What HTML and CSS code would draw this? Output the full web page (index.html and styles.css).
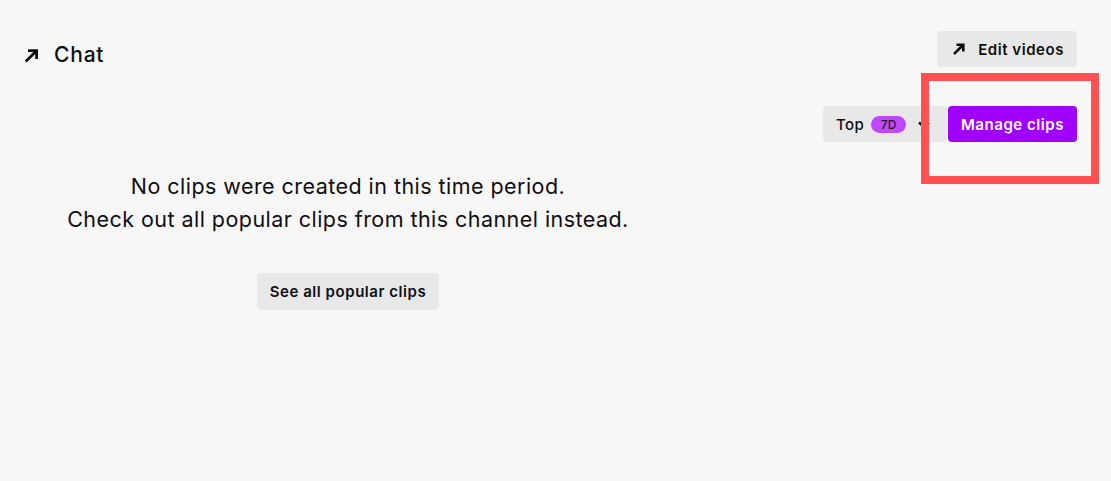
FILE: index.html
```html
<!DOCTYPE html>
<html>
<head>
<meta charset="utf-8">
<link rel="stylesheet" href="styles.css">
</head>
<body>
<div class="page">
  <div class="topbar">
    <a class="chat-link">
      <svg class="arrow" width="15" height="15" viewBox="0 0 15 15"><path d="M1.8 13.5 L12 3.3 M4 2.6 H12.6 V11" fill="none" stroke="#0e0e10" stroke-width="2.8" stroke-linecap="butt"/></svg>
      <span>Chat</span>
    </a>
    <button class="btn btn-grey edit-btn">
      <svg class="arrow-sm" width="14" height="14" viewBox="0 0 14 14"><path d="M2 12 L11 3 M4.5 2.7 H11.3 V9.5" fill="none" stroke="#0e0e10" stroke-width="2.6" stroke-linecap="butt"/></svg>
      <span>Edit videos</span>
    </button>
  </div>
  <div class="controls">
    <div class="dropdown">
      <span class="dd-label">Top</span>
      <span class="badge">7D</span>
      <svg class="chev" width="14" height="8" viewBox="0 0 14 8"><path d="M2 1.5 L7 6 L12 1.5" fill="none" stroke="#0e0e10" stroke-width="2.4"/></svg>
    </div>
    <button class="btn btn-purple">Manage clips</button>
  </div>
  <div class="empty">
    <p class="empty-text">No clips were created in this time period.</p>
    <p class="empty-text">Check out all popular clips from this channel instead.</p>
    <button class="btn btn-grey popular-btn">See all popular clips</button>
  </div>
</div>
<div class="highlight"></div>
</body>
</html>
```

FILE: styles.css
```css
html, body {
  margin: 0;
  padding: 0;
  background: #f7f7f8;
  font-family: Inter, "Noto Sans", sans-serif;
  color: #0e0e10;
}
.page {
  padding: 31px 34px 0 24px;
}
.topbar {
  display: flex;
  justify-content: space-between;
  align-items: flex-start;
}
.chat-link {
  display: flex;
  align-items: center;
  gap: 15px;
  margin-top: 12px;
  font-size: 21px;
  letter-spacing: 0.8px;
  font-weight: 500;
  line-height: 24px;
}
.btn {
  border: none;
  border-radius: 4px;
  height: 36px;
  padding: 0 13px;
  font-family: Inter, "Noto Sans", sans-serif;
  font-size: 15px;
  letter-spacing: 0.55px;
  font-weight: 600;
  display: inline-flex;
  align-items: center;
  cursor: pointer;
}
.btn-grey {
  background: #e8e8e9;
  color: #0e0e10;
}
.edit-btn {
  gap: 12px;
  padding: 0 13px 0 15px;
}
.btn-purple {
  background: #a000fe;
  color: #ffffff;
  padding: 0 13px;
}
.controls {
  display: flex;
  justify-content: flex-end;
  gap: 1px;
  margin-top: 39px;
}
.dropdown {
  display: flex;
  align-items: center;
  height: 36px;
  width: 124px;
  box-sizing: border-box;
  padding: 0 0 0 13px;
  background: #e8e8e9;
  border-radius: 4px;
  font-size: 15px;
  letter-spacing: 0.4px;
  font-weight: 500;
}
.dd-label {
  margin-right: 7px;
}
.badge {
  background: #bf47ff;
  color: #1f1f23;
  font-size: 12px;
  letter-spacing: 0.2px;
  font-weight: 500;
  height: 17px;
  line-height: 17px;
  width: 35px;
  text-align: center;
  border-radius: 9px;
  margin-right: 11px;
}
.chev {
  margin-top: 1px;
}
.empty {
  width: 648px;
  display: flex;
  flex-direction: column;
  align-items: center;
  margin-top: 28px;
}
.empty-text {
  margin: 0;
  font-size: 21.5px;
  letter-spacing: 0.45px;
  line-height: 33px;
  font-weight: 400;
}
.popular-btn {
  margin-top: 37px;
  height: 37px;
}
.highlight {
  position: absolute;
  left: 921px;
  top: 73px;
  width: 162px;
  height: 95px;
  border: 8px solid #ff5151;
}
```
